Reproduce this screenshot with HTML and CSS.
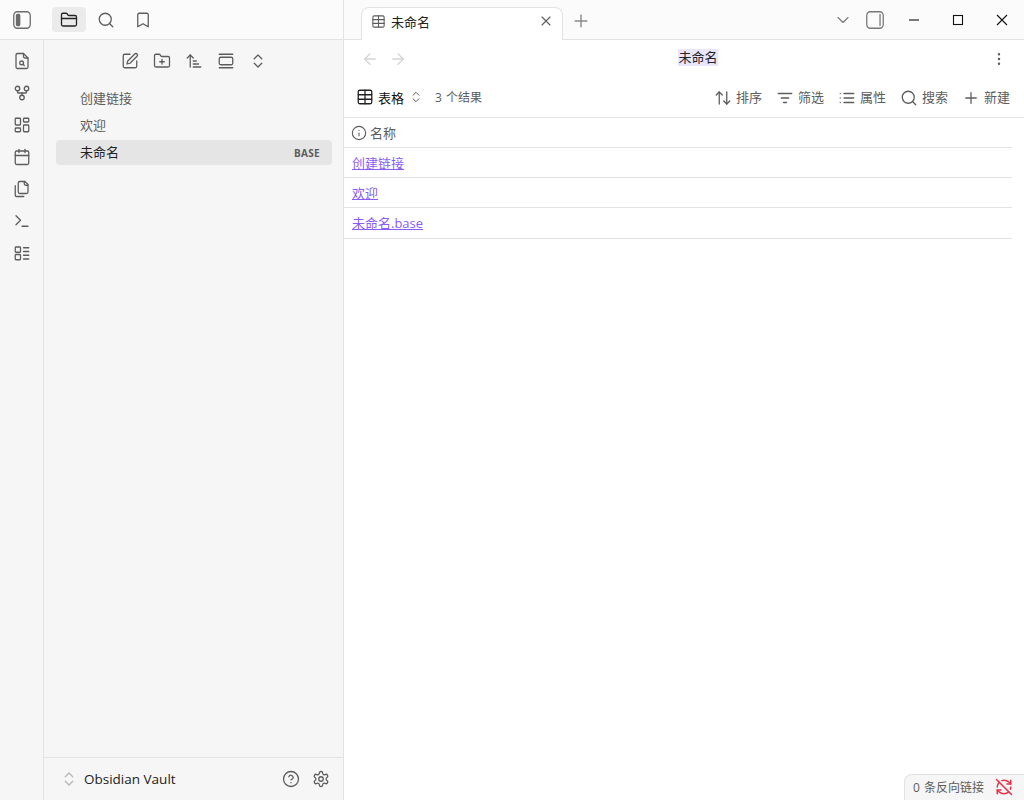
FILE: index.html
```html
<!DOCTYPE html>
<html lang="zh-CN">
<head>
  <meta charset="UTF-8" />
  <title>未命名 - Obsidian Vault</title>
  <link rel="stylesheet" href="styles.css">
</head>
<body>
  <svg class="sprite" xmlns="http://www.w3.org/2000/svg">
    <symbol id="i-sidebar-left" viewBox="0 0 24 24"><rect x="3" y="3" width="18" height="18" rx="4"/><rect x="6" y="6" width="3.5" height="12" rx="1" fill="currentColor"/></symbol>
    <symbol id="i-sidebar-right" viewBox="0 0 24 24"><rect x="3" y="3" width="18" height="18" rx="4"/><path d="M17.5 6v12"/></symbol>
    <symbol id="i-folder" viewBox="0 0 24 24"><path d="M20 20a2 2 0 0 0 2-2V8a2 2 0 0 0-2-2h-7.9a2 2 0 0 1-1.69-.9L9.6 3.9A2 2 0 0 0 7.93 3H4a2 2 0 0 0-2 2v13a2 2 0 0 0 2 2Z"/><path d="M2 10h20"/></symbol>
    <symbol id="i-search" viewBox="0 0 24 24"><circle cx="11" cy="11" r="8"/><path d="m21 21-4.3-4.3"/></symbol>
    <symbol id="i-bookmark" viewBox="0 0 24 24"><path d="m19 21-7-4-7 4V5a2 2 0 0 1 2-2h10a2 2 0 0 1 2 2v16z"/></symbol>
    <symbol id="i-file-search" viewBox="0 0 24 24"><path d="M14 2v4a2 2 0 0 0 2 2h4"/><path d="M6 2h8l6 6v12a2 2 0 0 1-2 2H6a2 2 0 0 1-2-2V4a2 2 0 0 1 2-2Z"/><circle cx="11.5" cy="14.5" r="2.5"/><path d="M13.3 16.3 15 18"/></symbol>
    <symbol id="i-fork" viewBox="0 0 24 24"><circle cx="12" cy="18" r="3"/><circle cx="6" cy="6" r="3"/><circle cx="18" cy="6" r="3"/><path d="M18 9v2c0 .6-.4 1-1 1H7c-.6 0-1-.4-1-1V9"/><path d="M12 12v3"/></symbol>
    <symbol id="i-dashboard" viewBox="0 0 24 24"><rect x="3" y="3" width="7" height="9" rx="1"/><rect x="14" y="3" width="7" height="5" rx="1"/><rect x="14" y="12" width="7" height="9" rx="1"/><rect x="3" y="16" width="7" height="5" rx="1"/></symbol>
    <symbol id="i-calendar" viewBox="0 0 24 24"><path d="M8 2v4"/><path d="M16 2v4"/><rect x="3" y="4" width="18" height="18" rx="2"/><path d="M3 10h18"/></symbol>
    <symbol id="i-files" viewBox="0 0 24 24"><path d="M20 7h-3a2 2 0 0 1-2-2V2"/><path d="M9 18a2 2 0 0 1-2-2V4a2 2 0 0 1 2-2h7l4 4v10a2 2 0 0 1-2 2Z"/><path d="M3 7.6v12.8A1.6 1.6 0 0 0 4.6 22h9.8"/></symbol>
    <symbol id="i-terminal" viewBox="0 0 24 24"><path d="m4 17 6-6-6-6"/><path d="M12 19h8"/></symbol>
    <symbol id="i-todo" viewBox="0 0 24 24"><rect x="3" y="4" width="7" height="7" rx="1"/><rect x="3" y="14" width="7" height="7" rx="1"/><path d="M14 5h7"/><path d="M14 10h7"/><path d="M14 15h7"/><path d="M14 20h7"/></symbol>
    <symbol id="i-edit" viewBox="0 0 24 24"><path d="M12 3H5a2 2 0 0 0-2 2v14a2 2 0 0 0 2 2h14a2 2 0 0 0 2-2v-7"/><path d="M18.375 2.625a2.121 2.121 0 1 1 3 3L12 15l-4 1 1-4Z"/></symbol>
    <symbol id="i-folder-plus" viewBox="0 0 24 24"><path d="M12 10v6"/><path d="M9 13h6"/><path d="M20 20a2 2 0 0 0 2-2V8a2 2 0 0 0-2-2h-7.9a2 2 0 0 1-1.69-.9L9.6 3.9A2 2 0 0 0 7.93 3H4a2 2 0 0 0-2 2v13a2 2 0 0 0 2 2Z"/></symbol>
    <symbol id="i-sort" viewBox="0 0 24 24"><path d="m3 8 4-4 4 4"/><path d="M7 4v16"/><path d="M11 12h4"/><path d="M11 16h7"/><path d="M11 20h10"/></symbol>
    <symbol id="i-fold" viewBox="0 0 24 24"><path d="M3 3h18"/><path d="M3 21h18"/><rect x="3" y="7" width="18" height="10" rx="2"/></symbol>
    <symbol id="i-updown" viewBox="0 0 24 24"><path d="m7 15 5 5 5-5"/><path d="m7 9 5-5 5 5"/></symbol>
    <symbol id="i-table" viewBox="0 0 24 24"><path d="M12 3v18"/><rect x="3" y="3" width="18" height="18" rx="2"/><path d="M3 9h18"/><path d="M3 15h18"/></symbol>
    <symbol id="i-x" viewBox="0 0 24 24"><path d="M18 6 6 18"/><path d="m6 6 12 12"/></symbol>
    <symbol id="i-plus" viewBox="0 0 24 24"><path d="M5 12h14"/><path d="M12 5v14"/></symbol>
    <symbol id="i-chevron" viewBox="0 0 24 24"><path d="m6 9 6 6 6-6"/></symbol>
    <symbol id="i-left" viewBox="0 0 24 24"><path d="m12 19-7-7 7-7"/><path d="M19 12H5"/></symbol>
    <symbol id="i-right" viewBox="0 0 24 24"><path d="M5 12h14"/><path d="m12 5 7 7-7 7"/></symbol>
    <symbol id="i-more" viewBox="0 0 24 24"><circle cx="12" cy="12" r="1"/><circle cx="12" cy="5" r="1"/><circle cx="12" cy="19" r="1"/></symbol>
    <symbol id="i-arrows" viewBox="0 0 24 24"><path d="m21 16-4 4-4-4"/><path d="M17 20V4"/><path d="m3 8 4-4 4 4"/><path d="M7 4v16"/></symbol>
    <symbol id="i-filter" viewBox="0 0 24 24"><path d="M3 6h18"/><path d="M7 12h10"/><path d="M10 18h4"/></symbol>
    <symbol id="i-list" viewBox="0 0 24 24"><path d="M8 6h13"/><path d="M8 12h13"/><path d="M8 18h13"/><path d="M3 6h.01"/><path d="M3 12h.01"/><path d="M3 18h.01"/></symbol>
    <symbol id="i-info" viewBox="0 0 24 24"><circle cx="12" cy="12" r="10"/><path d="M12 16v-4"/><path d="M12 8h.01"/></symbol>
    <symbol id="i-help" viewBox="0 0 24 24"><circle cx="12" cy="12" r="10"/><path d="M9.09 9a3 3 0 0 1 5.83 1c0 2-3 3-3 3"/><path d="M12 17h.01"/></symbol>
    <symbol id="i-gear" viewBox="0 0 24 24"><path d="M12.22 2h-.44a2 2 0 0 0-2 2v.18a2 2 0 0 1-1 1.73l-.43.25a2 2 0 0 1-2 0l-.15-.08a2 2 0 0 0-2.73.73l-.22.38a2 2 0 0 0 .73 2.73l.15.1a2 2 0 0 1 1 1.72v.51a2 2 0 0 1-1 1.74l-.15.09a2 2 0 0 0-.73 2.73l.22.38a2 2 0 0 0 2.73.73l.15-.08a2 2 0 0 1 2 0l.43.25a2 2 0 0 1 1 1.73V20a2 2 0 0 0 2 2h.44a2 2 0 0 0 2-2v-.18a2 2 0 0 1 1-1.73l.43-.25a2 2 0 0 1 2 0l.15.08a2 2 0 0 0 2.73-.73l.22-.39a2 2 0 0 0-.73-2.73l-.15-.08a2 2 0 0 1-1-1.74v-.5a2 2 0 0 1 1-1.74l.15-.09a2 2 0 0 0 .73-2.73l-.22-.38a2 2 0 0 0-2.73-.73l-.15.08a2 2 0 0 1-2 0l-.43-.25a2 2 0 0 1-1-1.73V4a2 2 0 0 0-2-2z"/><circle cx="12" cy="12" r="3"/></symbol>
    <symbol id="i-sync-off" viewBox="0 0 24 24"><path d="M21 8 18.74 5.74A9.75 9.75 0 0 0 12 3c-1 0-1.97.16-2.87.47"/><path d="M8 16H3v5"/><path d="M3 12c0-2.49 1-4.74 2.64-6.36"/><path d="m3 16 2.26 2.26A9.75 9.75 0 0 0 12 21c2.49 0 4.74-1 6.36-2.64"/><path d="M21 12c0 1-.16 1.97-.47 2.87"/><path d="M21 3v5h-5"/><path d="M22 22 2 2"/></symbol>
  </svg>

  <div class="app">
    <aside class="left">
      <div class="left-top">
        <span class="toggle"><svg class="icon sidebar-icon"><use href="#i-sidebar-left"/></svg></span>
        <span class="tab-btn active"><svg class="icon dark"><use href="#i-folder"/></svg></span>
        <span class="tab-btn"><svg class="icon"><use href="#i-search"/></svg></span>
        <span class="tab-btn"><svg class="icon"><use href="#i-bookmark"/></svg></span>
      </div>
      <div class="left-body">
        <nav class="ribbon">
          <svg class="icon"><use href="#i-file-search"/></svg>
          <svg class="icon"><use href="#i-fork"/></svg>
          <svg class="icon"><use href="#i-dashboard"/></svg>
          <svg class="icon"><use href="#i-calendar"/></svg>
          <svg class="icon"><use href="#i-files"/></svg>
          <svg class="icon"><use href="#i-terminal"/></svg>
          <svg class="icon"><use href="#i-todo"/></svg>
        </nav>
        <div class="files">
          <div class="files-actions">
            <svg class="icon"><use href="#i-edit"/></svg>
            <svg class="icon"><use href="#i-folder-plus"/></svg>
            <svg class="icon"><use href="#i-sort"/></svg>
            <svg class="icon"><use href="#i-fold"/></svg>
            <svg class="icon"><use href="#i-updown"/></svg>
          </div>
          <ul class="file-list">
            <li class="file">创建链接</li>
            <li class="file">欢迎</li>
            <li class="file selected">未命名<span class="tag">BASE</span></li>
          </ul>
          <div class="vault">
            <svg class="icon vault-switch"><use href="#i-updown"/></svg>
            <span class="vault-name">Obsidian Vault</span>
            <svg class="icon"><use href="#i-help"/></svg>
            <svg class="icon"><use href="#i-gear"/></svg>
          </div>
        </div>
      </div>
    </aside>

    <main class="right">
      <div class="tabbar">
        <div class="tab">
          <svg class="icon tab-icon"><use href="#i-table"/></svg>
          <span class="tab-title">未命名</span>
          <svg class="icon tab-close"><use href="#i-x"/></svg>
        </div>
        <svg class="icon new-tab"><use href="#i-plus"/></svg>
        <div class="tabbar-end">
          <svg class="icon tab-list"><use href="#i-chevron"/></svg>
          <svg class="icon side-right"><use href="#i-sidebar-right"/></svg>
          <div class="win-btns">
            <svg class="win" viewBox="0 0 12 12"><path d="M1 6h10"/></svg>
            <svg class="win" viewBox="0 0 12 12"><rect x="1.5" y="1.5" width="9" height="9"/></svg>
            <svg class="win" viewBox="0 0 12 12"><path d="M1 1l10 10M11 1 1 11"/></svg>
          </div>
        </div>
      </div>

      <div class="viewhead">
        <div class="nav-arrows">
          <svg class="icon pale"><use href="#i-left"/></svg>
          <svg class="icon pale"><use href="#i-right"/></svg>
        </div>
        <div class="view-title"><span>未命名</span></div>
        <svg class="icon more"><use href="#i-more"/></svg>
      </div>

      <div class="toolbar">
        <svg class="icon dark"><use href="#i-table"/></svg>
        <span class="view-name">表格</span>
        <svg class="icon view-switch"><use href="#i-updown"/></svg>
        <span class="count">3 个结果</span>
        <div class="tools">
          <span class="tool"><svg class="icon"><use href="#i-arrows"/></svg>排序</span>
          <span class="tool"><svg class="icon"><use href="#i-filter"/></svg>筛选</span>
          <span class="tool"><svg class="icon"><use href="#i-list"/></svg>属性</span>
          <span class="tool"><svg class="icon"><use href="#i-search"/></svg>搜索</span>
          <span class="tool"><svg class="icon"><use href="#i-plus"/></svg>新建</span>
        </div>
      </div>

      <div class="table">
        <div class="row head"><svg class="icon head-icon"><use href="#i-info"/></svg>名称</div>
        <div class="row"><a href="#">创建链接</a></div>
        <div class="row"><a href="#">欢迎</a></div>
        <div class="row last"><a href="#">未命名.base</a></div>
      </div>
    </main>
  </div>

  <div class="status">0 条反向链接<svg class="icon sync"><use href="#i-sync-off"/></svg></div>
</body>
</html>
```

FILE: styles.css
```css
* {
  box-sizing: border-box;
}

html, body {
  margin: 0;
  height: 100%;
}

body {
  font-family: "Open Sans", "Noto Sans CJK SC", sans-serif;
  font-size: 13px;
  color: #222;
  background: #fff;
  overflow: hidden;
}

.sprite {
  display: none;
}

.icon {
  width: 18px;
  height: 18px;
  flex: none;
  fill: none;
  stroke: #5c5c5c;
  stroke-width: 1.7;
  stroke-linecap: round;
  stroke-linejoin: round;
}

.icon.dark {
  stroke: #222;
}

.icon.pale {
  stroke: #d4d4d4;
}

.app {
  display: flex;
  height: 800px;
}

/* left side */
.left {
  width: 344px;
  display: flex;
  flex-direction: column;
  background: #f6f6f6;
  border-right: 1px solid #e3e3e3;
}

.left-top {
  height: 40px;
  display: flex;
  align-items: center;
  padding-left: 11px;
  background: #fbfbfb;
  border-bottom: 1px solid #e3e3e3;
}

.toggle {
  display: flex;
  margin-right: 19px;
  color: #6b6b6b;
}

.sidebar-icon {
  width: 22px;
  height: 22px;
  stroke: #6b6b6b;
  stroke-width: 1.4;
}

.tab-btn {
  width: 34px;
  height: 25px;
  margin-right: 3px;
  display: flex;
  align-items: center;
  justify-content: center;
  border-radius: 4px;
}

.tab-btn.active {
  background: #ebebeb;
}

.left-body {
  flex: 1;
  display: flex;
  min-height: 0;
}

.ribbon {
  width: 44px;
  display: flex;
  flex-direction: column;
  align-items: center;
  gap: 14px;
  padding-top: 12px;
  border-right: 1px solid #e3e3e3;
}

.files {
  flex: 1;
  display: flex;
  flex-direction: column;
}

.files-actions {
  height: 42px;
  display: flex;
  align-items: center;
  justify-content: center;
  gap: 14px;
}

.file-list {
  list-style: none;
  margin: 0;
  padding: 4px 11px 0 12px;
  flex: 1;
}

.file {
  height: 25px;
  margin-bottom: 2px;
  padding: 0 12px 3px 24px;
  display: flex;
  align-items: center;
  justify-content: space-between;
  border-radius: 4px;
  color: #5c5c5c;
}

.file.selected {
  background: #e5e5e5;
  color: #222;
}

.tag {
  margin-top: 4px;
  font-size: 10px;
  font-weight: 700;
  letter-spacing: 0.3px;
  color: #5c5c5c;
}

.vault {
  height: 43px;
  display: flex;
  align-items: center;
  gap: 12px;
  padding: 0 13px 0 16px;
  border-top: 1px solid #e3e3e3;
}

.vault-switch {
  stroke: #b5b5b5;
}

.vault-name {
  flex: 1;
  margin-left: -6px;
  font-size: 13.5px;
}

/* right side */
.right {
  flex: 1;
  min-width: 0;
  display: flex;
  flex-direction: column;
}

.tabbar {
  height: 40px;
  display: flex;
  align-items: flex-end;
  padding-left: 17px;
  background: #fbfbfb;
  border-bottom: 1px solid #e3e3e3;
}

.tab {
  width: 202px;
  height: 33px;
  margin-bottom: -1px;
  display: flex;
  align-items: center;
  padding: 0 8px 6px 9px;
  background: #fff;
  border: 1px solid #e3e3e3;
  border-bottom: none;
  border-radius: 8px 8px 0 0;
}

.tab-icon {
  width: 15px;
  height: 15px;
}

.tab-title {
  flex: 1;
  margin-left: 5px;
}

.tab-close {
  width: 16px;
  height: 16px;
}

.new-tab {
  width: 20px;
  height: 20px;
  margin: 0 0 8px 8px;
  stroke: #8a8a8a;
}

.tabbar-end {
  margin-left: auto;
  height: 39px;
  display: flex;
  align-items: center;
}

.tab-list {
  width: 20px;
  height: 20px;
  margin-right: 11px;
  stroke: #777;
  stroke-width: 1.4;
}

.side-right {
  width: 22px;
  height: 22px;
  margin-right: 6px;
  stroke: #777;
  stroke-width: 1.4;
}

.win-btns {
  display: flex;
}

.win {
  width: 44px;
  height: 12px;
  fill: none;
  stroke: #111;
  stroke-width: 1.1;
}

.viewhead {
  height: 40px;
  display: flex;
  align-items: center;
  padding: 0 17px 2px;
}

.nav-arrows {
  display: flex;
  gap: 10px;
}

.view-title {
  flex: 1;
  display: flex;
  justify-content: center;
  padding: 0 2px 4px 0;
}

.view-title span {
  background: #e9e5fc;
  line-height: 17px;
}

.more {
  width: 16px;
  height: 16px;
}

.toolbar {
  height: 38px;
  display: flex;
  align-items: center;
  padding: 0 14px 3px 12px;
  border-bottom: 1px solid #e3e3e3;
}

.view-name {
  margin-left: 4px;
  color: #111;
}

.view-switch {
  width: 14px;
  height: 14px;
  margin-left: 5px;
}

.count {
  margin-left: 12px;
  font-size: 12px;
  word-spacing: 1px;
  color: #5c5c5c;
}

.tools {
  margin: 0 0 2px auto;
  display: flex;
  gap: 14px;
}

.tool {
  display: flex;
  align-items: center;
  gap: 4px;
  color: #5c5c5c;
}

.tool .icon {
  transform: translateY(2px);
}

.table {
  margin-right: 12px;
}

.row {
  height: 30px;
  display: flex;
  align-items: center;
  padding-left: 8px;
  border-bottom: 1px solid #e3e3e3;
}

.row.head {
  gap: 3px;
  padding-left: 7px;
  color: #5c5c5c;
}

.head-icon {
  width: 16px;
  height: 16px;
}

.row.last {
  height: 31px;
  padding-bottom: 1px;
}

.row a {
  color: #8a5cf5;
}

.status {
  position: absolute;
  right: 0;
  bottom: 0;
  width: 120px;
  height: 26px;
  display: flex;
  align-items: center;
  gap: 11px;
  padding: 0 0 2px 8px;
  font-size: 12px;
  word-spacing: 1px;
  color: #5c5c5c;
  background: #f6f6f6;
  border: 1px solid #e3e3e3;
  border-width: 1px 0 0 1px;
  border-radius: 8px 0 0 0;
}

.sync {
  stroke: #e93147;
  stroke-width: 2;
}
```
